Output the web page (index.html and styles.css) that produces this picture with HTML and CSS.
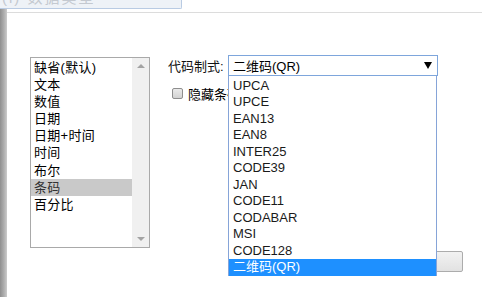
FILE: index.html
```html
<!DOCTYPE html>
<html lang="zh">
<head>
<meta charset="utf-8">
<title>条码</title>
<link rel="stylesheet" href="styles.css">
</head>
<body>
<div class="topbar">
  <div class="titlebox"><span class="title-text">(i) 数据类型</span></div>
</div>
<div class="frame">
  <div class="strip"></div>
  <div class="content">
    <div class="panel">
      <div class="listbox">
        <ul class="items">
          <li>缺省(默认)</li>
          <li>文本</li>
          <li>数值</li>
          <li>日期</li>
          <li>日期+时间</li>
          <li>时间</li>
          <li>布尔</li>
          <li class="sel">条码</li>
          <li>百分比</li>
        </ul>
        <div class="vscroll">
          <span class="arrow-up"></span>
          <span class="arrow-down"></span>
        </div>
      </div>
      <div class="options">
        <div class="row-format">
          <span class="label">代码制式:</span>
          <div class="select-wrap">
            <div class="select">
              <span class="select-value">二维码(QR)</span>
              <span class="caret"></span>
            </div>
            <ul class="dropdown">
              <li>UPCA</li>
              <li>UPCE</li>
              <li>EAN13</li>
              <li>EAN8</li>
              <li>INTER25</li>
              <li>CODE39</li>
              <li>JAN</li>
              <li>CODE11</li>
              <li>CODABAR</li>
              <li>MSI</li>
              <li>CODE128</li>
              <li class="hi">二维码(QR)</li>
            </ul>
          </div>
        </div>
        <label class="row-check"><span class="checkbox"></span><span>隐藏条码</span></label>
        <div class="btn-row"><span class="button">确定</span></div>
      </div>
    </div>
  </div>
</div>
</body>
</html>
```
FILE: styles.css
```css
* { box-sizing: border-box; }
html, body {
  margin: 0;
  padding: 0;
  width: 482px;
  height: 297px;
  overflow: hidden;
  background: #ffffff;
  font-family: "Liberation Sans", "Noto Sans CJK SC", sans-serif;
  font-size: 13px;
  color: #000;
}
ul { list-style: none; margin: 0; padding: 0; }

.topbar { height: 9px; }
.titlebox {
  width: 182px;
  height: 9px;
  background: #eef2f7;
  border-right: 1px solid #b9cbe3;
  border-bottom: 1px solid #b9cbe3;
  border-bottom-right-radius: 2px;
  overflow: hidden;
}
.title-text {
  display: block;
  margin-top: -11px;
  padding-left: 2px;
  font-size: 15px;
  line-height: 18px;
  color: #c4c9d0;
  letter-spacing: 2px;
}

.frame { display: flex; height: 288px; }
.strip {
  width: 7px;
  background: linear-gradient(to right, #8f8f8f, #b0b0b0 60%, #cccccc);
}
.content { flex: 1; padding-top: 3px; }
.panel {
  border-top: 1px solid #dcdcdc;
  display: flex;
  padding: 44px 0 0 23px;
}

.listbox {
  width: 120px;
  height: 191px;
  border: 1px solid #a9a9a9;
  display: flex;
}
.items { flex: 1; padding-top: 1px; }
.items li {
  height: 17.1px;
  line-height: 17px;
  padding-left: 3px;
  white-space: nowrap;
  letter-spacing: 0.3px;
}
.items li.sel { background: #c9c9c9; color: #333; }
.vscroll {
  width: 17px;
  background: #f0f0f0;
  display: flex;
  flex-direction: column;
  justify-content: space-between;
  align-items: center;
  padding: 6px 0 6px;
}
.arrow-up {
  width: 0; height: 0;
  border-left: 4px solid transparent;
  border-right: 4px solid transparent;
  border-bottom: 4px solid #a3a3a3;
}
.arrow-down {
  width: 0; height: 0;
  border-left: 4px solid transparent;
  border-right: 4px solid transparent;
  border-top: 4px solid #a3a3a3;
}

.options {
  margin-left: 18px;
  margin-top: -2px;
  width: 295px;
  display: flex;
  flex-direction: column;
}
.row-format { display: flex; align-items: center; height: 21px; }
.label { width: 60px; color: #111; }
.select-wrap { position: relative; }
.select {
  width: 210px;
  height: 21px;
  border: 1px solid #7ea6dc;
  display: flex;
  align-items: center;
  justify-content: space-between;
  padding: 0 5px 0 4px;
  background: #fff;
}
.caret {
  width: 0; height: 0;
  border-left: 4px solid transparent;
  border-right: 4px solid transparent;
  border-top: 7px solid #000;
}
.dropdown {
  position: absolute;
  top: 21px;
  left: 0;
  width: 209px;
  height: 200px;
  border: 1px solid #86a4d8;
  border-top: none;
  background: #fff;
  padding-top: 1.5px;
  z-index: 5;
}
.dropdown li {
  height: 16.5px;
  line-height: 16px;
  padding-left: 4px;
  color: #1a1a1a;
}
.dropdown li.hi { background: #1e90ff; color: #fff; }

.row-check {
  display: flex;
  align-items: center;
  margin-top: 11px;
  padding-left: 4px;
  height: 13px;
}
.checkbox {
  width: 11px;
  height: 11px;
  border: 1px solid #8e8e8e;
  border-radius: 2px;
  background: linear-gradient(#eaeaea, #d2d2d2);
  margin-right: 5px;
}

.btn-row { display: flex; justify-content: flex-end; margin-top: 151px; }
.button {
  width: 80px;
  height: 21px;
  border: 1px solid #acacac;
  border-radius: 2px;
  background: linear-gradient(#f2f2f2, #e2e2e2);
  text-align: center;
  line-height: 19px;
}
```
